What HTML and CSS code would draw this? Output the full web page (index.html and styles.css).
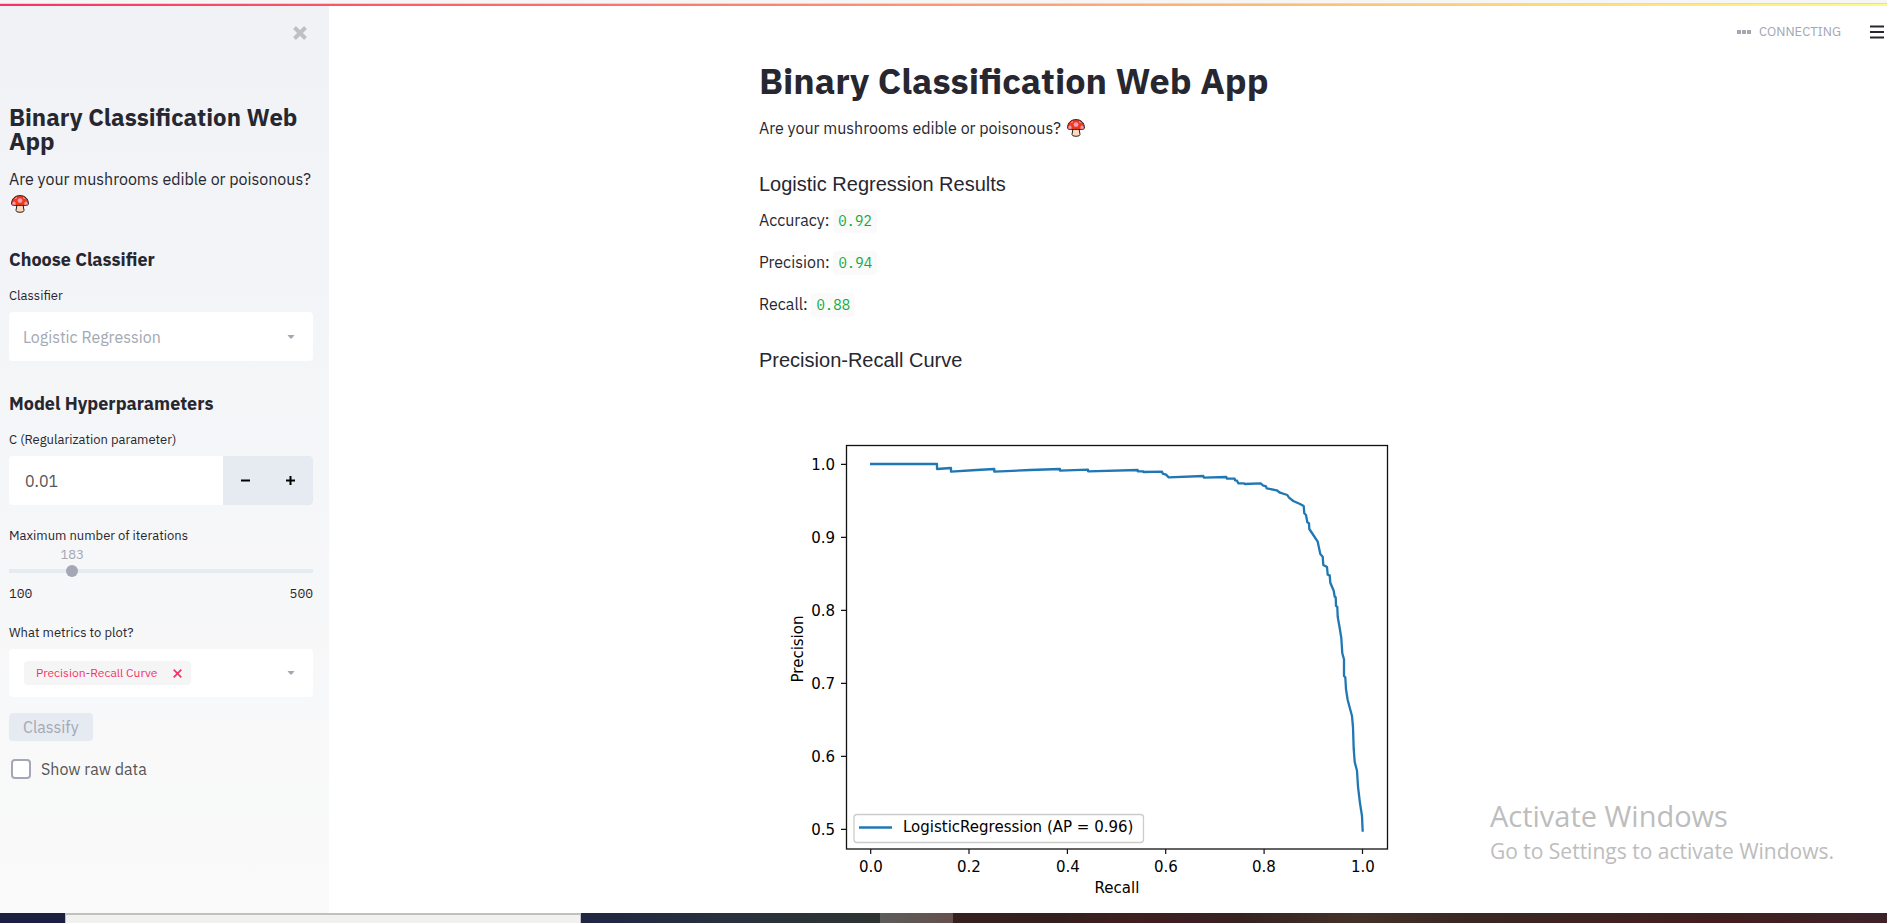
FILE: index.html
```html
<!DOCTYPE html>
<html lang="en">
<head>
<meta charset="utf-8">
<meta name="viewport" content="width=device-width, initial-scale=1">
<title>Binary Classification Web App</title>
<link rel="stylesheet" href="styles.css">
</head>
<body>
<svg class="defs" aria-hidden="true">
  <symbol id="mushroom" viewBox="0 0 18 18">
    <path d="M6 9.500 5 15.500Q5 17.300 9 17.300T13 15.500L12 9.500Z" fill="#ffd9bd" stroke="#222" stroke-width="1"/>
    <path d="M.6 9C.6 3.500 4.200.6 9 .6S17.400 3.500 17.400 9C17.400 11 12.500 10.400 9 10.400S.6 11 .6 9Z" fill="#f03a17" stroke="#222" stroke-width="1"/>
    <circle cx="9" cy="5.600" r="2.400" fill="#f79ab8"/>
    <path d="M1.200 9.600C1.200 7.500 2 6.600 3.200 6.600S5 8.500 4.400 9.900ZM16.800 9.600C16.800 7.500 16 6.600 14.800 6.600S13 8.500 13.600 9.900ZM3.200 4.400 5.600 1.800 6 3.200ZM14.800 4.400 12.400 1.800 12 3.200Z" fill="#f79ab8"/>
  </symbol>
  <symbol id="caret" viewBox="0 0 8 4"><path d="M.5 0h7L5 3.200Q4 4 3 3.200Z" fill="#a3a8b4"/></symbol>
</svg>

<div class="browser-edge"></div>
<div class="decoration"></div>

<div class="app">
  <aside class="sidebar">
    <div class="sidebar-top">
      <button class="close" type="button" aria-label="Close sidebar">
        <svg width="14" height="14" viewBox="0 0 14 14"><path d="M1.500 1.500 12.500 12.500M12.500 1.500 1.500 12.500" stroke="#bfc0c5" stroke-width="4" fill="none"/></svg>
      </button>
    </div>
    <h1 class="side-title">Binary Classification Web App</h1>
    <p class="side-text">Are your mushrooms edible or poisonous? <svg class="emoji" role="img" aria-label="mushroom"><use href="#mushroom"/></svg></p>

    <h2 class="side-heading">Choose Classifier</h2>
    <label class="label" for="classifier">Classifier</label>
    <div class="select-box">
      <select id="classifier" disabled><option>Logistic Regression</option></select>
      <svg class="caret" aria-hidden="true"><use href="#caret"/></svg>
    </div>

    <h2 class="side-heading">Model Hyperparameters</h2>
    <label class="label" for="reg">C (Regularization parameter)</label>
    <div class="number-box">
      <input id="reg" type="text" inputmode="decimal" value="0.01">
      <button type="button" aria-label="Decrease"><svg width="9" height="9" viewBox="0 0 9 9"><path d="M0 4.500H9" stroke="#000" stroke-width="2"/></svg></button>
      <button type="button" aria-label="Increase"><svg width="9" height="9" viewBox="0 0 9 9"><path d="M0 4.500H9M4.500 0V9" stroke="#000" stroke-width="2"/></svg></button>
    </div>

    <label class="label spaced" for="iters">Maximum number of iterations</label>
    <div class="slider">
      <div class="slider-value"><output for="iters" style="left:20.75%">183</output></div>
      <div class="slider-track"><input id="iters" type="range" min="100" max="500" value="183" disabled></div>
      <div class="slider-range"><span>100</span><span>500</span></div>
    </div>

    <label class="label spaced" for="metrics">What metrics to plot?</label>
    <div class="multi-box">
      <span class="tag">Precision-Recall Curve
        <button type="button" aria-label="Remove Precision-Recall Curve"><svg width="9" height="9" viewBox="0 0 9 9"><path d="M.7.7 8.300 8.300M8.300.7.7 8.300" stroke="#f63366" stroke-width="1.700"/></svg></button>
      </span>
      <input id="metrics" type="text" disabled>
      <svg class="caret" aria-hidden="true"><use href="#caret"/></svg>
    </div>

    <button class="classify" type="button" disabled>Classify</button>
    <label class="check"><input type="checkbox"><span>Show raw data</span></label>
  </aside>

  <main class="main">
    <div class="toolbar">
      <span class="status"><i></i><i></i><i></i><span>CONNECTING</span></span>
      <button class="menu" type="button" aria-label="Menu">
        <svg width="14" height="14" viewBox="0 0 14 14"><path d="M0 1.500H14M0 7H14M0 12.500H14" stroke="#262730" stroke-width="2"/></svg>
      </button>
    </div>
    <div class="block">
      <h1 class="title">Binary Classification Web App</h1>
      <p class="text">Are your mushrooms edible or poisonous? <svg class="emoji" role="img" aria-label="mushroom"><use href="#mushroom"/></svg></p>
      <h3 class="subheader">Logistic Regression Results</h3>
      <p class="text">Accuracy: <code>0.92</code></p>
      <p class="text">Precision: <code>0.94</code></p>
      <p class="text">Recall: <code>0.88</code></p>
      <h3 class="subheader">Precision-Recall Curve</h3>
      <svg class="chart" viewBox="759 383 698 523" role="img" aria-label="Precision-recall curve">
        <rect x="846.5" y="445.500" width="541" height="403.500" fill="none" stroke="#111" stroke-width="1.3"/>
        <path d="M841 464.300h5M841 537.300h5M841 610.300h5M841 683.300h5M841 756.300h5M841 829.300h5M870.700 849v5M969 849v5M1067.400 849v5M1165.700 849v5M1264.100 849v5M1362.500 849v5" stroke="#111" stroke-width="1.200"/>
        <path class="curve" d="M870 464H937V469L951 468V471.700L976.700 470 994.300 469V471.700L1030 470 1060 469V470.700L1088 469.700V471.300L1137.700 470V471.300H1143.300V472L1162 471.700 1162.700 473.700 1166 474.700 1168.700 477.300 1203.300 476 1204 477.700 1226.300 477 1227 478.700H1234.700L1235 480.300 1237 480.700 1238.300 483.300H1244L1244.700 484 1260.700 483.300 1262.700 485.300 1266 486.300 1266.700 488.300 1276.700 490.300 1280 492.700 1287.300 495 1289 497.700 1293.300 501 1300 504 1303.700 506 1304.300 513.300 1306 515 1307.300 522.300 1309 523.300 1309.300 529 1313.300 535 1317.700 541.700 1320.300 554 1322.700 556.700 1323.300 565 1327 567 1327.700 574.700 1329.700 575.300 1330.300 582.700 1333.700 590.700 1334.700 596.700 1335.700 597.300 1336 606 1337.300 606.700 1337.700 616.700 1339.700 628 1341.300 638 1342.300 653.300 1344 659.300V676L1345.300 677.300 1346 689.300 1347.700 700 1349.300 706 1352 716 1353 727.300 1353.700 748.700 1354.700 762 1357 770.700 1358 786.700 1360 803.300 1362 816 1362.700 831.700"/>
        <rect x="854" y="814.500" width="289.500" height="28" rx="3" fill="#fff" stroke="#ccc" stroke-width="1.300"/>
        <path class="curve" d="M859 827.500H892"/>
        <text x="903" y="832">LogisticRegression (AP = 0.96)</text>
        <g text-anchor="end">
          <text x="835" y="470">1.0</text><text x="835" y="543">0.9</text><text x="835" y="616">0.8</text>
          <text x="835" y="689">0.7</text><text x="835" y="762">0.6</text><text x="835" y="835">0.5</text>
        </g>
        <g text-anchor="middle">
          <text x="871" y="872">0.0</text><text x="969" y="872">0.2</text><text x="1068" y="872">0.4</text>
          <text x="1166" y="872">0.6</text><text x="1264" y="872">0.8</text><text x="1363" y="872">1.0</text>
          <text x="1117" y="893">Recall</text>
          <text transform="translate(803 649) rotate(-90)">Precision</text>
        </g>
      </svg>
    </div>
    <div class="watermark"><p class="wm-title">Activate Windows</p><p class="wm-text">Go to Settings to activate Windows.</p></div>
  </main>
</div>

<footer class="taskbar"><span class="t1"></span><span class="t2"></span><span class="t3"></span><span class="t4"></span><span class="t5"></span></footer>
</body>
</html>
```
FILE: styles.css
```css
* { box-sizing: border-box; }

body {
  margin: 0;
  min-height: 100vh;
  display: flex;
  flex-direction: column;
  background: #fff;
  color: #262730;
  font: 16px/26px "IBM Plex Sans", Roboto, "Liberation Sans", sans-serif;
}

h1, h2, h3, p { margin: 0; }
button, input, select { font: inherit; color: inherit; margin: 0; border: 0; padding: 0; background: none; opacity: 1; }
button { display: flex; align-items: center; justify-content: center; }
input, select { min-width: 0; }
.defs { position: absolute; width: 0; height: 0; }

.browser-edge { height: 4px; background: #f6f6f7; border-bottom: 1px solid #d9d9dc; }
.decoration { height: 2px; background: linear-gradient(90deg, #f63366, #fffd80); }

.app { flex: 1; display: flex; }

/* Sidebar */
.sidebar {
  flex: none;
  width: 329px;
  padding: 0 16px 48px 9px;
  background: linear-gradient(180deg, #f0f2f6, #fafafa);
}
.sidebar-top { height: 99px; padding: 20px 6px 0 0; display: flex; justify-content: flex-end; align-items: flex-start; }
.side-title { font-size: 24px; line-height: 24px; font-weight: 700; margin-bottom: 14px; }
.side-text { line-height: 25px; }
.side-heading { font-size: 18px; line-height: 24px; font-weight: 700; margin: 31px 0 14px; }
.label { display: block; font-size: 13px; line-height: 20px; margin-bottom: 6px; }
.label.spaced { margin-top: 21px; }
.emoji { width: 18px; height: 18px; margin-left: 2px; vertical-align: -3px; }

.select-box, .multi-box, .number-box {
  position: relative;
  display: flex;
  align-items: center;
  height: 49px;
  border-radius: 4px;
  background: #fff;
  overflow: hidden;
}
.select-box select { flex: 1; height: 100%; padding: 0 40px 0 14px; appearance: none; color: #a3a8b4; }
.caret { position: absolute; right: 18px; width: 8px; height: 4px; pointer-events: none; }
.number-box input { flex: 1; height: 100%; padding: 0 16px; color: #555; }
.number-box button { width: 45px; height: 100%; background: #e6eaf1; }

.slider, code { font-family: "IBM Plex Mono", "Liberation Mono", monospace; }
.slider { font-size: 13px; line-height: 17px; margin-top: -6px; }
.slider-value { position: relative; height: 19px; color: #a3a8b4; }
.slider-value output { position: absolute; transform: translateX(-50%); }
.slider-track { height: 12px; display: flex; margin: 0 -6px 8px; }
.slider-track input { width: 100%; height: 12px; appearance: none; background: linear-gradient(#e6eaf1, #e6eaf1) center / calc(100% - 12px) 4px no-repeat; }
.slider-track input::-webkit-slider-thumb { appearance: none; width: 12px; height: 12px; border-radius: 50%; background: #a3a8b4; }
.slider-range { display: flex; justify-content: space-between; }

.multi-box { height: 48px; padding-left: 15px; }
.multi-box input { flex: 1; }
.tag { display: flex; align-items: center; gap: 16px; height: 24px; padding: 0 9px 0 12px; border-radius: 4px; background: #f5f5f6; color: #f63366; font-size: 12px; white-space: nowrap; }

.classify { height: 28px; padding: 0 14px; margin: 16px 0 18px; border-radius: 4px; background: #e6eaf1; color: #a3a8b4; }
.check { display: flex; align-items: center; gap: 10px; height: 20px; padding-left: 2px; color: #555; }
.check input { appearance: none; width: 20px; height: 20px; border: 2px solid #a3a8b4; border-radius: 4px; background: #fff; }

/* Main column */
.main { position: relative; flex: 1; min-width: 0; padding: 0 16px; }
.toolbar { position: absolute; top: 13px; right: 3px; display: flex; align-items: center; gap: 29px; height: 26px; }
.status { display: flex; align-items: center; gap: 1px; font-size: 13px; color: #a3a8b4; }
.status i { width: 4px; height: 4px; background: #a3a8b4; }
.status span { margin-left: 7px; }

.block { max-width: 698px; margin: 0 auto; padding-top: 53px; }
.title { font-size: 36px; line-height: 44px; font-weight: 700; margin-bottom: 12px; }
.text { margin-bottom: 16px; }
.subheader { font: 400 20px/24px "Liberation Sans", Arial, sans-serif; margin: 32px 0 11px; }
code { font-size: 14px; line-height: 14px; padding: 3px 5px; border-radius: 4px; background: #fafafa; color: #09ab3b; }
.text + .subheader { margin-top: 31px; }
.chart { display: block; width: 100%; height: auto; font: 15px "DejaVu Sans", sans-serif; fill: #000; }
.chart .curve { fill: none; stroke: #1f77b4; stroke-width: 2.3; stroke-linejoin: round; }

.watermark { position: absolute; right: 53px; bottom: 47px; color: #bdbdbd; font-family: "Segoe UI", "Open Sans", sans-serif; }
.wm-title { font-size: 29px; line-height: 40px; }
.wm-text { font-size: 21px; line-height: 30px; }

/* Desktop taskbar strip */
.taskbar { display: flex; height: 10px; }
.t1 { width: 65px; background: #1b1f40; }
.t2 { width: 516px; background: #f1f1f0; border: 1px solid #c0c0c0; border-width: 2px 1px 0; }
.t3 { width: 299px; background: linear-gradient(90deg, #1f2744, #28313c 50%, #2f3432); }
.t4 { width: 73px; background: linear-gradient(90deg, #5c5c5b, #65504d); }
.t5 { flex: 1; background: linear-gradient(90deg, #35201f, #341f1e 11%, #3f1f1e 19%, #3c1f24 25%, #36221f 31%, #443129 43%, #3a2722 55%, #421f1f 82%, #3c2329); }
```
